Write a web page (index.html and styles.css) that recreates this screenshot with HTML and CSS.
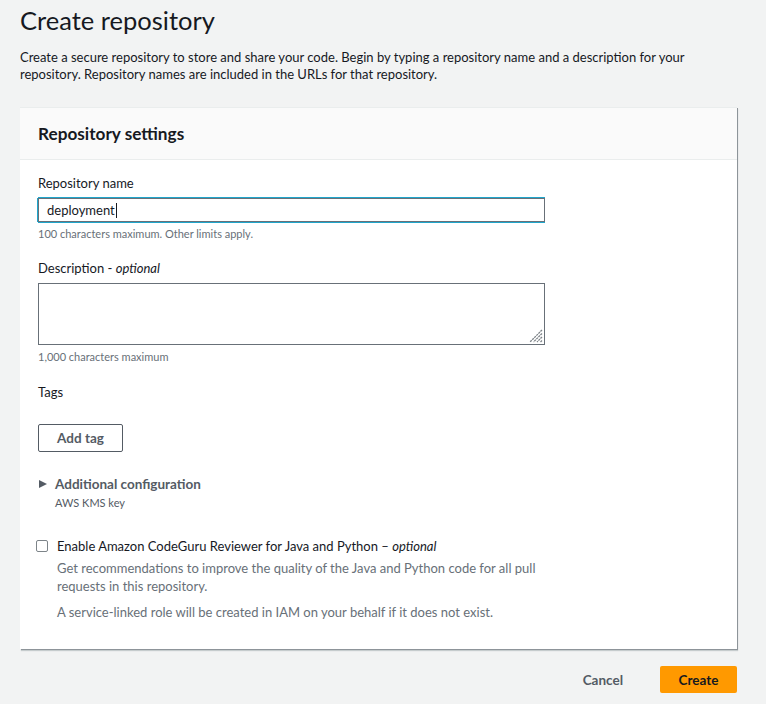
FILE: index.html
```html
<!DOCTYPE html>
<html>
<head>
<meta charset="utf-8">
<link rel="stylesheet" href="styles.css">
</head>
<body>
<main class="page">
  <h1 class="title">Create repository</h1>
  <p class="intro">Create a secure repository to store and share your code. Begin by typing a repository name and a description for your repository. Repository names are included in the URLs for that repository.</p>

  <section class="panel">
    <header class="panel-head"><h2>Repository settings</h2></header>
    <div class="panel-body">
      <div class="field">
        <label class="label">Repository name</label>
        <div class="input focused">deployment<span class="caret"></span></div>
        <div class="hint">100 characters maximum. Other limits apply.</div>
      </div>
      <div class="field">
        <label class="label">Description - <i>optional</i></label>
        <div class="textarea"><svg class="grip" width="14" height="14" viewBox="0 0 14 14"><path d="M13 1L1 13M13 4.5L4.5 13M13 8L8 13M13 11.5L11.5 13" stroke="#7d8388" stroke-width="1.3" stroke-dasharray="2.2 0.7"/></svg></div>
        <div class="hint">1,000 characters maximum</div>
      </div>
      <div class="field tags">
        <label class="label">Tags</label>
        <button class="btn-normal">Add tag</button>
      </div>
      <div class="expander">
        <div class="exp-row"><span class="tri"></span><span class="exp-title">Additional configuration</span></div>
        <div class="exp-sub">AWS KMS key</div>
      </div>
      <div class="check">
        <span class="box"></span>
        <div class="check-text">
          <div class="check-label">Enable Amazon CodeGuru Reviewer for Java and Python – <i>optional</i></div>
          <p class="check-desc">Get recommendations to improve the quality of the Java and Python code for all pull requests in this repository.</p>
          <p class="check-desc">A service-linked role will be created in IAM on your behalf if it does not exist.</p>
        </div>
      </div>
    </div>
  </section>

  <div class="actions">
    <button class="btn-link">Cancel</button>
    <button class="btn-primary">Create</button>
  </div>
</main>
</body>
</html>
```

FILE: styles.css
```css
html, body { margin: 0; padding: 0; }
body {
  background: #f2f3f3;
  font-family: Lato, "Open Sans", sans-serif;
  color: #16191f;
  font-size: 13px;
  width: 766px;
  height: 704px;
  overflow: hidden;
}
.page { padding: 0 29px 0 20px; }
.title {
  margin: 0;
  padding-top: 4px;
  font-size: 25.5px;
  font-weight: 400;
  line-height: 32px;
}
.intro {
  margin: 13px 0 0;
  line-height: 17px;
  max-width: 700px;
}
.panel {
  margin-top: 24px;
  width: 717px;
  background: #fff;
  border-top: 1px solid #eaeded;
  box-shadow: 1px 1px 0 0 #8d9499, 1px 2px 1px 0 rgba(0,28,36,.18);
}
.panel-head {
  background: #fafafa;
  border-bottom: 1px solid #eaeded;
  height: 51px;
  display: flex;
  align-items: center;
  padding: 0 18px;
}
.panel-head h2 { margin: 0; font-size: 17.2px; font-weight: 700; line-height: 22px; }
.panel-body { padding: 13px 18px 28px; }
.label { display: block; line-height: 20px; margin-bottom: 5px; }
.input {
  width: 507px;
  height: 24px;
  box-sizing: border-box;
  border: 1px solid #687078;
  box-shadow: 0 -1px 0 #1fa6cc, 0 1px 0 #1fa6cc, -1px 0 0 #1fa6cc;
  padding: 0 8px;
  display: flex;
  align-items: center;
}
.caret { width: 1px; height: 15px; background: #16191f; margin-left: 1px; }
.hint { font-size: 11px; color: #687078; line-height: 16px; margin-top: 4px; }
.field + .field { margin-top: 16px; }
.textarea {
  width: 507px;
  height: 62px;
  box-sizing: border-box;
  border: 1px solid #687078;
  position: relative;
}
.grip { position: absolute; right: 1px; bottom: 1px; }
.tags { margin-top: 17px !important; }
.tags .label { margin-bottom: 22px; }
.btn-normal {
  font-family: inherit;
  font-size: 13.5px;
  font-weight: 700;
  color: #545b64;
  background: #fff;
  border: 1px solid #545b64;
  border-radius: 2px;
  width: 85px;
  height: 28px;
  padding: 0;
}
.expander { margin-top: 22px; }
.exp-row { display: flex; align-items: center; gap: 8px; }
.tri { width: 0; height: 0; border-left: 8px solid #545b64; border-top: 4.5px solid transparent; border-bottom: 4.5px solid transparent; margin-left: 1px; }
.exp-title { font-weight: 700; font-size: 13.5px; color: #545b64; line-height: 20px; }
.exp-sub { font-size: 11px; color: #545b64; padding-left: 17px; line-height: 16px; margin-top: 1px; }
.check { display: flex; gap: 9px; margin-top: 25px; }
.box { width: 10px; height: 10px; border: 1px solid #7d8489; border-radius: 2px; margin-top: 4px; flex: none; margin-left: -2px; }
.check-label { line-height: 20px; }
.check-desc { margin: 3px 0 0; color: #687078; line-height: 18px; max-width: 490px; }
.check-desc + .check-desc { margin-top: 8px; }
.actions { display: flex; justify-content: flex-end; align-items: center; gap: 37px; margin-top: 17px; width: 717px; }
.btn-link, .btn-primary { font-family: inherit; font-size: 13.5px; font-weight: 700; border: none; padding: 0; }
.btn-link { background: none; color: #545b64; }
.btn-primary { background: #ff9900; color: #16191f; width: 77px; height: 27px; border-radius: 2px; }
```
